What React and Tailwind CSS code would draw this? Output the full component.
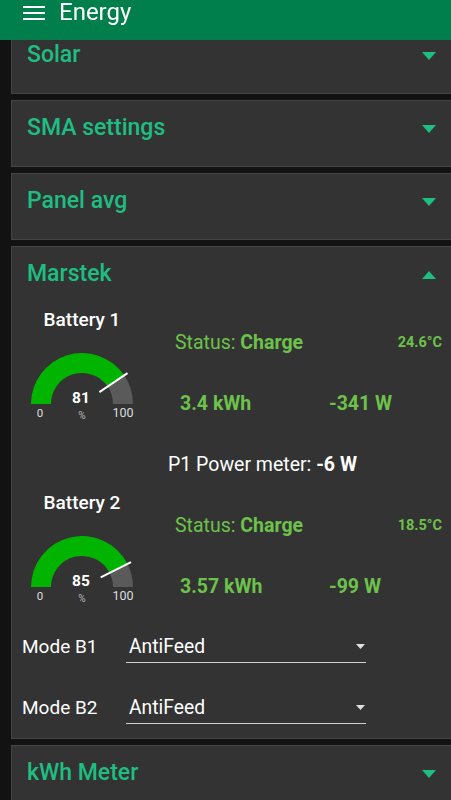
import React from "react";

const font = { fontFamily: "Roboto, 'Noto Sans', Arial, sans-serif" };

function Tri({ up = false }) {
  return (
    <svg width="14" height="8" viewBox="0 0 14 8" className="block">
      {up ? (
        <polygon points="0,8 14,8 7,0" fill="#1ebe82" />
      ) : (
        <polygon points="0,0 14,0 7,8" fill="#1ebe82" />
      )}
    </svg>
  );
}

function Card({ title, open = false, children }) {
  return (
    <div className="border border-[#444444] bg-[#333333] mb-[6px]">
      <div
        className={`flex justify-between items-start pl-[15px] pr-[16px] pt-[14px] ${
          open ? "h-[55px]" : "h-[65px]"
        }`}
      >
        <span className="text-[23px] leading-[26px] font-medium text-[#1ebe82]">{title}</span>
        <span className="mt-[10px]">
          <Tri up={open} />
        </span>
      </div>
      {children}
    </div>
  );
}

function Gauge({ value }) {
  const cx = 70;
  const cy = 51;
  const R = 51;
  const r = 31;
  const th = Math.PI - (Math.PI * value) / 100;
  const px = (rad) => cx + rad * Math.cos(th);
  const py = (rad) => cy - rad * Math.sin(th);
  const green = `M ${cx - R} ${cy} A ${R} ${R} 0 0 1 ${px(R)} ${py(R)} L ${px(r)} ${py(r)} A ${r} ${r} 0 0 0 ${cx - r} ${cy} Z`;
  const gray = `M ${px(R)} ${py(R)} A ${R} ${R} 0 0 1 ${cx + R} ${cy} L ${cx + r} ${cy} A ${r} ${r} 0 0 0 ${px(r)} ${py(r)} Z`;
  return (
    <svg width="140" height="70" viewBox="0 0 140 70" className="block">
      <path d={green} fill="#00b400" />
      <path d={gray} fill="#5a5a5a" />
      <line x1={px(21)} y1={py(21)} x2={px(55)} y2={py(55)} stroke="#ffffff" strokeWidth="2" />
      <text x="69" y="50" textAnchor="middle" fill="#ffffff" fontSize="15.5" fontWeight="700" style={font}>
        {value}
      </text>
      <text x="70" y="66" textAnchor="middle" fill="#bbbbbb" fontSize="10" style={font}>
        %
      </text>
      <text x="28" y="64" textAnchor="middle" fill="#dddddd" fontSize="11.5" style={font}>
        0
      </text>
      <text x="111" y="64" textAnchor="middle" fill="#dddddd" fontSize="12.5" style={font}>
        100
      </text>
    </svg>
  );
}

function Battery({ name, value, temp, kwh, watt }) {
  return (
    <div className="flex h-[143px]">
      <div className="w-[140px] flex flex-col items-center">
        <div className="mt-[6px] text-[19px] leading-[24px] font-medium text-white">{name}</div>
        <div className="mt-[21px]">
          <Gauge value={value} />
        </div>
      </div>
      <div className="flex-1 flex flex-col text-[#6cc24a]">
        <div className="mt-[29px] h-[24px] pl-[23px] pr-[10px] flex justify-between items-center">
          <span className="text-[19.5px] leading-[24px]">
            Status: <span className="font-bold">Charge</span>
          </span>
          <span className="text-[14.5px] font-bold">{temp}</span>
        </div>
        <div className="mt-[37px] h-[24px] pl-[28px] flex items-center text-[19.5px] font-bold leading-[24px]">
          <span className="w-[149px]">{kwh}</span>
          <span>{watt}</span>
        </div>
      </div>
    </div>
  );
}

function ModeRow({ label, className = "" }) {
  return (
    <div className={`flex items-center h-[32px] pl-[10px] ${className}`}>
      <span className="w-[104px] text-[19px] text-white">{label}</span>
      <div className="w-[240px] h-[32px] border-b border-[#d0d0d0] flex items-center justify-between pl-[3px] pr-[1px]">
        <span className="text-[19.3px] text-white leading-[28px]">AntiFeed</span>
        <svg width="9" height="5" viewBox="0 0 9 5">
          <polygon points="0,0 9,0 4.5,5" fill="#e0e0e0" />
        </svg>
      </div>
    </div>
  );
}

export default function App() {
  return (
    <div className="min-h-[800px] bg-[#121212] overflow-hidden" style={font}>
      <div className="fixed top-0 left-0 right-0 h-[40px] bg-[#007e4c] z-10 flex items-start">
        <div className="ml-[23px] mt-[6px] flex flex-col gap-[4px]">
          <div className="w-[22px] h-[2px] bg-white" />
          <div className="w-[22px] h-[2px] bg-white" />
          <div className="w-[22px] h-[2px] bg-white" />
        </div>
        <span className="ml-[14px] text-[24px] leading-[24px] text-white">Energy</span>
      </div>
      <div className="pt-[27px] pl-[11px] -mr-[2px]">
        <Card title="Solar" />
        <Card title="SMA settings" />
        <Card title="Panel avg" />
        <Card title="Marstek" open>
          <Battery name="Battery 1" value={81} temp="24.6°C" kwh="3.4 kWh" watt="-341 W" />
          <div className="h-[40px] flex items-center pl-[156px] text-[19.5px] text-white">
            P1 Power meter:&nbsp;<span className="font-bold">-6 W</span>
          </div>
          <Battery name="Battery 2" value={85} temp="18.5°C" kwh="3.57 kWh" watt="-99 W" />
          <ModeRow label="Mode B1" className="mt-[3px]" />
          <ModeRow label="Mode B2" className="mt-[29px]" />
          <div className="h-[14px]" />
        </Card>
        <Card title="kWh Meter" />
      </div>
    </div>
  );
}
